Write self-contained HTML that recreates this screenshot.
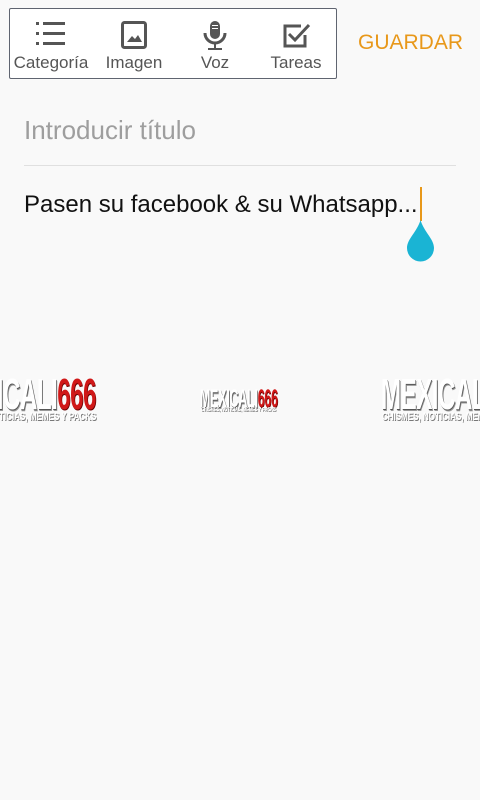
<!DOCTYPE html>
<html><head><meta charset="utf-8"><style>
body{margin:0;width:480px;height:800px;background:#f9f9f9;font-family:"Liberation Sans",sans-serif;position:relative;overflow:hidden}
.wrap{position:absolute;left:0;top:0;width:480px;height:800px;overflow:hidden}
.tb{position:absolute;left:9px;top:8px;width:326px;height:69px;background:#fff;border:1px solid #5f6470;border-radius:2px}
.it{position:absolute;top:0;height:69px;color:#555;font-size:17px}
.it svg{position:absolute;left:50%;transform:translateX(-50%)}
.it span{position:absolute;left:0;right:0;top:44px;text-align:center;white-space:nowrap}
.sv{position:absolute;left:358px;top:31px;color:#e8981a;font-size:21px}
.ph{position:absolute;left:24px;top:115px;font-size:26px;color:#9e9e9e}
.hr{position:absolute;left:24px;top:165px;width:432px;height:1px;background:#e0e0e0}
.bd{position:absolute;left:24px;top:191px;font-size:24px;color:#111}
.cur{position:absolute;left:420px;top:187px;width:2px;height:34px;background:#e8981a}
.logo{position:absolute;font-family:"Liberation Sans",sans-serif;font-weight:bold;color:#fff;text-shadow:1px 1px 0 #555,2px 2px 0 #999;transform-origin:0 0;white-space:nowrap;letter-spacing:-1px}
.logo b{color:#d01818;text-shadow:1px 1px 0 #600}
.sub{position:absolute;font-weight:bold;color:#fff;text-shadow:1px 1px 0 #777;white-space:nowrap;transform-origin:0 0}
</style></head><body><div class="wrap">
<div class="tb">
 <div class="it" style="left:0;width:82px"><svg style="top:12px" width="32" height="26" viewBox="0 0 32 26"><g fill="#555"><rect x="1" y="1" width="3" height="3"/><rect x="8" y="1" width="22" height="3"/><rect x="1" y="11" width="3" height="3"/><rect x="8" y="11" width="22" height="3"/><rect x="1" y="21" width="3" height="3"/><rect x="8" y="21" width="22" height="3"/></g></svg><span>Categoría</span></div>
 <div class="it" style="left:84px;width:80px"><svg style="top:12px" width="26" height="28" viewBox="0 0 26 28"><rect x="1.5" y="1.5" width="23" height="25" rx="2" fill="none" stroke="#555" stroke-width="3"/><path d="M6 21l5-6 3 3 3-4 4 7z" fill="#555"/></svg><span>Imagen</span></div>
 <div class="it" style="left:166px;width:78px"><svg style="top:12px" width="24" height="30" viewBox="0 0 24 30"><rect x="7" y="0" width="10" height="18" rx="5" fill="#555"/><path d="M2 12a10 10 0 0 0 20 0" fill="none" stroke="#555" stroke-width="3"/><rect x="11" y="22" width="2" height="5" fill="#555"/><rect x="5" y="27" width="14" height="2" fill="#555"/><rect x="9" y="4" width="6" height="1" fill="#fff"/><rect x="9" y="7" width="6" height="1" fill="#fff"/></svg><span>Voz</span></div>
 <div class="it" style="left:246px;width:80px"><svg style="top:12px" width="30" height="30" viewBox="0 0 30 30"><path d="M24 14v11H4V5h16" fill="none" stroke="#555" stroke-width="3"/><path d="M8 13l6 6L28 4" fill="none" stroke="#555" stroke-width="3"/></svg><span>Tareas</span></div>
</div>
<div class="sv">GUARDAR</div>
<div class="ph">Introducir título</div>
<div class="hr"></div>
<div class="bd">Pasen su facebook &amp; su Whatsapp...</div>
<div class="cur"></div>
<svg style="position:absolute;left:406px;top:220px" width="29" height="43" viewBox="0 0 29 43"><path d="M14.5 0C11 12 1 19 1 28a13.5 13.5 0 0 0 27 0C28 19 18 12 14.5 0z" fill="#1ab4d4"/></svg>
<div class="logo" style="left:-54px;top:370px;font-size:44px;transform:scaleX(0.55)">MEXICALI<b>666</b></div>
<div class="sub" style="left:-54px;top:411px;font-size:11px;transform:scaleX(0.73)">CHISMES, NOTICIAS, MEMES Y PACKS</div>
<div class="logo" style="left:200px;top:385px;font-size:25px;transform:scaleX(0.5);letter-spacing:-0.5px">MEXICALI<b>666</b></div>
<div class="sub" style="left:201px;top:407px;font-size:5px;transform:scaleX(0.8)">CHISMES, NOTICIAS, MEMES Y PACKS</div>
<div class="logo" style="left:381px;top:370px;font-size:44px;transform:scaleX(0.55)">MEXICALI<b>666</b></div>
<div class="sub" style="left:382px;top:411px;font-size:11px;transform:scaleX(0.73)">CHISMES, NOTICIAS, MEMES Y PACKS</div>
</div></body></html>
